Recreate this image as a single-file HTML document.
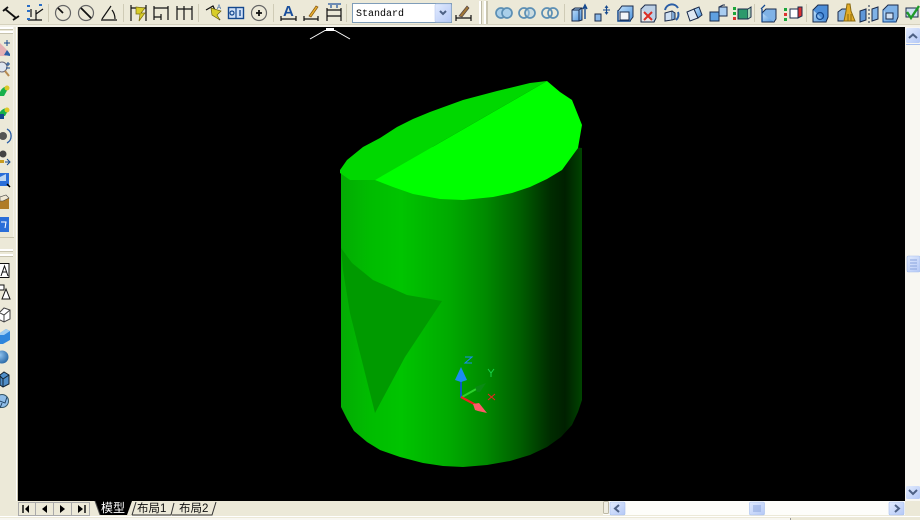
<!DOCTYPE html>
<html><head><meta charset="utf-8"><style>
html,body{margin:0;padding:0;width:920px;height:520px;overflow:hidden;background:#ece9d8}
svg{position:absolute;left:0;top:0;display:block}
text{font-family:"Liberation Sans","WenQuanYi Zen Hei",sans-serif}
</style></head><body>
<svg width="920" height="520" viewBox="0 0 920 520" xmlns="http://www.w3.org/2000/svg">
<defs>
<linearGradient id="body" x1="341" x2="582" y1="0" y2="0" gradientUnits="userSpaceOnUse">
<stop offset="0" stop-color="#04ac04"/><stop offset=".12" stop-color="#00bc00"/><stop offset=".25" stop-color="#00c400"/>
<stop offset=".45" stop-color="#00aa00"/><stop offset=".6" stop-color="#008a00"/><stop offset=".75" stop-color="#005c00"/>
<stop offset=".87" stop-color="#002c00"/><stop offset=".93" stop-color="#002000"/><stop offset="1" stop-color="#004400"/>
</linearGradient>
<linearGradient id="btn" x1="0" x2="1" y1="0" y2="1"><stop offset="0" stop-color="#e2ebfe"/><stop offset="1" stop-color="#b4c8f6"/></linearGradient>
<linearGradient id="cube" x1="0" x2="1" y1="0" y2="1"><stop offset="0" stop-color="#c4e2fb"/><stop offset="1" stop-color="#4b92dc"/></linearGradient>
<radialGradient id="sph" cx=".35" cy=".35" r=".8"><stop offset="0" stop-color="#8fc2ee"/><stop offset="1" stop-color="#1b5c9c"/></radialGradient>
</defs>

<rect x="0" y="0" width="920" height="520" fill="#ece9d8"/>
<rect x="0" y="24" width="920" height="1" fill="#d6d2be"/>
<rect x="0" y="25" width="920" height="2" fill="#f4f2e8"/>
<rect x="18" y="27" width="887" height="474" fill="#000"/>

<!-- crosshair -->
<path d="M310 39L325 30.500H335L350 39" stroke="#fff" fill="none"/>
<rect x="326" y="28" width="8" height="2" fill="#fff"/>

<!-- cylinder -->
<path d="M341 170L341 407L347 419L354 431L367 442L380 450L400 457L423 463L443 466L463 467L487 465L510 461L530 455L547 447L561 437L572 425L578 412L582 400L582 148L500 140L400 150Z" fill="url(#body)"/>
<path d="M341 248L352 263L373 280L407 295L442 301L405 357L375 413L350 313L343 270Z" fill="#009a00"/>
<path d="M340 170L347 160L363 147L380 138L397 127L413 119L430 112L463 100L497 91L530 83L547 81L375 180L350 180L340 173Z" fill="#00d800"/>
<path d="M375 180L547 81L560 92L572 100L578 115L582 125L578 148L562 170L547 179L530 187L512 193L493 197L463 200L440 199L413 194L393 187Z" fill="#00ff00"/>

<!-- UCS -->
<path d="M461 398V378" stroke="#0b5cc0" stroke-width="2"/>
<path d="M461 367L467 380L461 382L455 380Z" fill="#1a8cf0"/>
<path d="M462 397L478 388" stroke="#2cd02c" stroke-width="2"/>
<path d="M475 387L486 383L480 392L477 392Z" fill="#0a8a14"/>
<path d="M461 397L476 405" stroke="#f02020" stroke-width="2.200"/>
<path d="M487 413L479 403L473 404L475 410L478 411Z" fill="#ff5a68"/>
<path d="M465 357H472L465 363H472" stroke="#1a8cf0" fill="none"/>
<path d="M488 369L491 373L494 369M491 373V377" stroke="#19d24a" fill="none"/>
<path d="M488 394L495 400M495 394L488 400" stroke="#ee2020" fill="none"/>

<!-- dividers top -->
<g fill="#cfcbb6"><rect x="48" y="4" width="1" height="18"/><rect x="123" y="4" width="1" height="18"/><rect x="198" y="4" width="1" height="18"/><rect x="273" y="4" width="1" height="18"/><rect x="346" y="4" width="1" height="18"/><rect x="564" y="4" width="1" height="18"/><rect x="754" y="4" width="1" height="18"/><rect x="806" y="4" width="1" height="18"/></g>

<!-- top icons -->
<g fill="none" stroke="#111" stroke-width="1.200">
<path d="M5 9L16 18M3 11L8 7M13 20L19 16" stroke-width="1.800"/>
<path d="M28 20H42M36 20V10M36 14L43 9M31 9V17" /><path d="M27 6h3M27 11h3M27 19h3M39 5h3" stroke="#2a6ec6" stroke-width="2"/>
<circle cx="63" cy="13" r="7.500" stroke="#666"/><path d="M63 13L58 8" stroke-width="1.800"/>
<circle cx="86" cy="13" r="7.500" stroke="#666"/><path d="M81 8L91 18" stroke-width="1.800"/>
<path d="M101 20H117M102 19L111 6M112 10Q115 14 115 19"/>
<path d="M131 5V21M146 5V21M131 8H146"/><path d="M136 7L145 8L141 13L145 13L139 21L140 14L136 14Z" fill="#d8cd29" stroke="#7a6c10" stroke-width=".7"/>
<path d="M154 6V20M168 6V20M154 8H168M154 17H161M161 14V20"/>
<path d="M177 6V20M184 6V20M192 6V20M177 9H192"/>
<path d="M206 10L213 6L216 12M212 12L220 20"/><path d="M211 8L221 11L217 15L220 20L212 15Z" fill="#d8cd29" stroke="#6a6010" stroke-width=".7"/>
<text x="217" y="9" font-size="6" fill="#1a4f9c" stroke="none">A</text>
<rect x="228.500" y="7.500" width="15" height="11" fill="#cfe0f6" stroke="#14488e" stroke-width="1.400"/><path d="M236 8V18" stroke="#14488e"/><circle cx="232" cy="13" r="2" stroke="#14488e"/><path d="M240 10V16" stroke="#14488e" stroke-width="1.300"/>
<circle cx="259" cy="13" r="7.500" stroke="#666"/><path d="M256 13H262M259 10V16" stroke-width="1.800"/>
<path d="M281 19H296M281 16V21M296 16V21"/>
<text x="283" y="16" font-size="15" font-weight="bold" fill="#1a4f9c" stroke="none">A</text>
<path d="M304 19H318M304 16V21M318 16V21"/><path d="M309 16L316 6L318 7L311 17Z" fill="#e8b030" stroke="#8a5a10" stroke-width=".7"/>
<path d="M327 8V21M341 8V21M327 16H341M327 10H341" /><path d="M328 4H341" stroke="#1a4f9c"/><path d="M331 8V5M337 8V5" stroke="#1a4f9c"/>
<path d="M456 18H471M456 15V21M471 15V21"/><path d="M459 16L467 6L469 8L462 17Z" fill="#a07838" stroke="#544" stroke-width=".7"/>
</g>

<!-- combo -->
<rect x="352.500" y="3.500" width="99" height="19" fill="#fff" stroke="#7f9db9"/>
<text x="356" y="16" font-size="10" fill="#000" style="font-family:'Liberation Mono',monospace">Standard</text>
<rect x="435" y="4" width="16" height="18" rx="1.500" fill="url(#btn)" stroke="#b7c9ee" stroke-width=".6"/>
<path d="M440 11L443 14L446 11" fill="none" stroke="#4d6185" stroke-width="2"/>

<!-- grips -->
<rect x="479" y="1" width="2" height="23" fill="#fff"/><rect x="481" y="1" width="1" height="23" fill="#bdb9a5"/>
<rect x="484" y="1" width="2" height="23" fill="#fff"/><rect x="486" y="1" width="2" height="23" fill="#c9c5b0"/>

<!-- right icons: rings -->
<g fill="none" stroke="#5c8fb4" stroke-width="1.700">
<circle cx="501" cy="13" r="5" fill="#a9cfe9"/><circle cx="507" cy="13" r="5" fill="#a9cfe9"/>
<circle cx="524" cy="13" r="5"/><circle cx="530" cy="13" r="5" fill="#a9cfe9" fill-opacity=".5"/>
<circle cx="547" cy="13" r="5"/><circle cx="553" cy="13" r="5"/>
</g>
<g stroke="#1a2a4a" stroke-width="1">
<path d="M572 10L575 8H582V20L579 21H572Z" fill="url(#cube)"/><path d="M572 10H579V21M579 10L582 8" fill="none"/><path d="M585 19V7M583 9L585 5L587 9" fill="none" stroke="#14488e" stroke-width="1.400"/>
<path d="M595 14H601V21H595Z" fill="#8ab8e8"/><path d="M603 10H610M606.500 6V14M605 8L606.500 6L608 8M605 12L606.500 14L608 12" stroke="#14488e" fill="none"/>
<path d="M618 11H630V21H618Z" fill="#fff" stroke-width="1.500" stroke="#14488e"/><path d="M618 11L622 6H633V17L630 21" fill="url(#cube)"/><path d="M620 12H629V20H620Z" fill="#f2f4f8"/>
<path d="M641 9H654V22H641Z" fill="#e8e8e8"/><path d="M641 9L645 5H656V18L654 22" fill="#bcd0e6"/><path d="M644 12L652 20M652 12L644 20" stroke="#dc2c24" stroke-width="2"/>
<path d="M665 13L672 11V20L665 21Z" fill="#cfe0f2"/><path d="M672 11L675 13V19L672 20" fill="#7fa8d4"/><path d="M665 10A7 7 0 0 1 678 8M678 12A7 7 0 0 1 676 20" fill="none" stroke="#2a5ea6" stroke-width="2"/>
<path d="M687 12L694 9L698 18L690 21Z" fill="#dfe8f2"/><path d="M694 9L699 7L702 15L698 18Z" fill="url(#cube)"/>
<path d="M710 12H719V21H710Z" fill="#5fa0e0"/><path d="M719 7H727V16H719Z" fill="#a9cdf0"/><path d="M719 12V7L723 5H725" fill="none"/>
<path d="M738 9H748V19H738Z" fill="#2c9a6c"/><path d="M748 9L751 7V17L748 19" fill="#a8d6b8"/><rect x="733" y="7" width="3" height="3" fill="#1ca63a" stroke="none"/><rect x="733" y="12" width="3" height="3" fill="#1ca63a" stroke="none"/><rect x="733" y="17" width="3" height="3" fill="#dc3030" stroke="none"/>
<path d="M762 13H774V22H762Z" fill="url(#cube)"/><path d="M762 13L766 9H776V19L774 22" fill="#7fb2e6"/><path d="M762 22V9M761 9L765 5" fill="none" stroke="#14488e" stroke-width="1.300"/>
<path d="M790 9H798V18H790Z" fill="#fff"/><path d="M798 7L802 7V16L798 18Z" fill="#dc3030"/><rect x="784" y="8" width="3" height="3" fill="#1ca63a" stroke="none"/><rect x="784" y="13" width="3" height="3" fill="#dc3030" stroke="none"/><rect x="784" y="18" width="3" height="3" fill="#1ca63a" stroke="none"/>
<path d="M813 10H826V22H813Z" fill="url(#cube)"/><path d="M813 10L818 5H828V17L826 22" fill="#4d8ed8"/><circle cx="820" cy="16" r="3.500" fill="none" stroke="#14488e" stroke-width="1.300"/>
<path d="M838 12L842 9H850V21H838Z" fill="#8fb7e0"/><path d="M847 4H850L851 11L855 21H844L846 11Z" fill="#e2ac28" stroke="#8a6a10"/><path d="M848 14V21M851 14V21" stroke="#8a6a10" fill="none"/>
<path d="M860 11L866 9V20L860 22Z" fill="#5f97d8"/><path d="M872 9L878 7V19L872 21Z" fill="#7fb2e6"/><path d="M869 5V23" fill="none" stroke-dasharray="2 2"/>
<path d="M883 10H896V22H883Z" fill="url(#cube)" stroke="#14488e"/><path d="M883 10L888 5H898V17L896 22" fill="#7fb2e6"/><rect x="886" y="13" width="7" height="6" fill="#cfe0f2"/>
<path d="M906 8H918V17H906Z" fill="#cfe0f2"/><path d="M907 12L911 18L919 6" fill="none" stroke="#1f9a2a" stroke-width="2.400"/>
</g>

<!-- left toolbar -->
<rect x="0" y="27" width="13" height="2" fill="#fff"/><rect x="0" y="29" width="13" height="1" fill="#c8c4ae"/><rect x="0" y="31" width="13" height="2" fill="#fff"/><rect x="0" y="33" width="13" height="1" fill="#c8c4ae"/>
<rect x="13" y="27" width="1" height="210" fill="#f4f2e8"/><rect x="16" y="27" width="1" height="474" fill="#fff"/><rect x="17" y="27" width="1" height="474" fill="#c8c4ae"/>
<path d="M4 43H10M7 40V46" stroke="#14488e" fill="none"/>
<path d="M0 43L9 52L6 56H0Z" fill="#e4b0b4"/><path d="M4 55L7 50L10 54V56Z" fill="#2a5ea6"/>
<circle cx="2" cy="67" r="5" fill="#dfe6ee" stroke="#667"/><path d="M5 71L9 76" stroke="#b88b50" stroke-width="2"/><path d="M6 64H10M8 62V66M6 68H10" stroke="#14488e"/>
<path d="M0 92C2 87 6 86 9 87L4 96H0Z" fill="#18b04c"/><circle cx="7" cy="88" r="2.500" fill="#dcc828"/>
<path d="M0 112C2 109 6 107 9 109L5 116H0Z" fill="#18b04c"/><circle cx="7" cy="110" r="2.500" fill="#dcc828"/><rect x="0" y="114" width="4" height="5" fill="#14488e"/>
<circle cx="3" cy="136" r="4" fill="#555"/><path d="M7 129A8 8 0 0 1 7 143" fill="none" stroke="#2a5ea6" stroke-width="1.300"/>
<circle cx="3" cy="154" r="3.500" fill="#444"/><rect x="0" y="160" width="4" height="3" fill="#c89c20"/><path d="M5 162H9M7 159L10 162L7 165" stroke="#14488e" fill="none"/>
<rect x="0" y="173" width="9" height="13" fill="#2a6ed8"/><path d="M0 177L6 174V181H0Z" fill="#bcd6f2"/><path d="M7 184L10 187" stroke="#000" stroke-width="1.500"/>
<rect x="0" y="198" width="9" height="11" fill="#b07c28"/><path d="M0 197L6 195L9 198L3 201H0Z" fill="#efe8d4" stroke="#444" stroke-width=".6"/>
<rect x="0" y="217" width="9" height="15" fill="#2a6ed8"/><path d="M1 222H6L5 228" stroke="#fff" fill="none"/>
<rect x="0" y="237" width="14" height="1" fill="#c8c4ae"/>

<rect x="0" y="249" width="13" height="2" fill="#fff"/><rect x="0" y="251" width="13" height="1" fill="#c8c4ae"/><rect x="0" y="254" width="13" height="2" fill="#fff"/><rect x="0" y="256" width="13" height="1" fill="#c8c4ae"/>
<path d="M0 263.500H9V277.500H0M1 276L4.500 266L8 276M2 272H7" fill="#fff" stroke="#111"/>
<path d="M0 285H4V290H0" fill="#fff" stroke="#111"/><path d="M2 299L6 289L10 299Z" fill="#fff" stroke="#111"/>
<path d="M0 312L4 308L10 310V319L4 322L0 320" fill="#fff" stroke="#444"/><path d="M0 313L4 315L10 310M4 315V322" fill="none" stroke="#444"/>
<path d="M0 333L6 329L10 331V340L3 344H0Z" fill="#2f86dc"/><path d="M0 333L6 329L10 331L4 335H0Z" fill="#9fcdf3"/>
<circle cx="2" cy="357" r="6.500" fill="url(#sph)"/>
<path d="M0 375L4 372L9 375V384L3 387L0 385Z" fill="#4f8ec8" stroke="#123"/><path d="M0 376L3 379L9 375M3 379V387" fill="none" stroke="#123"/>
<circle cx="2" cy="401" r="6.500" fill="#8fbde8" stroke="#356"/><path d="M-3 400L5 403L7 397M2 403L0 408" fill="none" stroke="#246"/>

<!-- right scrollbar -->
<rect x="905" y="27" width="15" height="474" fill="#f8f7f2"/>
<rect x="906" y="28" width="14" height="15" rx="1.500" fill="url(#btn)"/><rect x="906" y="44" width="14" height="1" fill="#a8c0ee"/>
<path d="M909 38L913 34.500L917 38" fill="none" stroke="#4d6185" stroke-width="2"/>
<rect x="907" y="256" width="13" height="16" rx="1.500" fill="url(#btn)" stroke="#a8c0ee" stroke-width=".6"/>
<path d="M910 260H917M910 263H917M910 266H917M910 269H917" stroke="#8aa4dc"/>
<rect x="906" y="486" width="14" height="13" rx="1.500" fill="url(#btn)"/>
<path d="M909 490L913 494L917 490" fill="none" stroke="#4d6185" stroke-width="2"/>

<!-- tabs -->
<g fill="#ece9d8" stroke="#aaa"><rect x="18.500" y="502.500" width="17" height="13"/><rect x="35.500" y="502.500" width="18" height="13"/><rect x="53.500" y="502.500" width="18" height="13"/><rect x="71.500" y="502.500" width="18" height="13"/></g>
<path d="M23 505V513" stroke="#000" stroke-width="1.400"/><path d="M29 505V513L25 509Z M47 505V513L42 509Z M60 505V513L65 509Z M78 505V513L83 509Z" fill="#000"/><path d="M85 505V513" stroke="#000" stroke-width="1.400"/>
<path d="M95 501L100 515H127L132 501Z" fill="#000"/>
<path d="M95 501L100 515" stroke="#555"/>
<text x="101" y="512" font-size="12" fill="#fff">模型</text>
<path d="M132 515L136 502M132 515H171L174 503M172 515H212L216 502" fill="none" stroke="#333"/>
<text x="137" y="512" font-size="11.500" fill="#111">布局1</text>
<text x="179" y="512" font-size="11.500" fill="#111">布局2</text>

<!-- bottom scrollbar -->
<rect x="603" y="501" width="302" height="14" fill="#fdfdfa"/>
<rect x="603.500" y="501.500" width="5" height="12" rx="1" fill="#f0eee2" stroke="#bdb9a5"/>
<rect x="610" y="502" width="15" height="13" rx="1.500" fill="url(#btn)" stroke="#a8c0ee" stroke-width=".6"/>
<path d="M619 505L615 508.500L619 512" fill="none" stroke="#4d6185" stroke-width="2"/>
<rect x="749.500" y="502" width="15" height="13" rx="1.500" fill="url(#btn)" stroke="#a8c0ee" stroke-width=".6"/>
<path d="M754 505V512M756 505V512M758 505V512M760 505V512" stroke="#8aa4dc"/>
<rect x="889" y="502" width="15" height="13" rx="1.500" fill="url(#btn)" stroke="#a8c0ee" stroke-width=".6"/>
<path d="M895 505L899 508.500L895 512" fill="none" stroke="#4d6185" stroke-width="2"/>

<!-- status -->
<rect x="0" y="516" width="920" height="1" fill="#fff"/>
<rect x="0" y="518" width="790" height="2" fill="#f8f7f2"/>
<rect x="790" y="518" width="1" height="2" fill="#999"/>
</svg>
</body></html>
